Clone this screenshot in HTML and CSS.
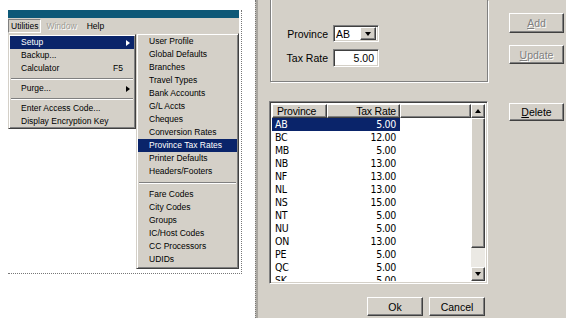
FILE: index.html
```html
<!DOCTYPE html>
<html lang="en">
<head>
    <meta charset="UTF-8">
    <meta name="viewport" content="width=device-width, initial-scale=1.0">
    <title>Province Tax Rates</title>
    <link rel="stylesheet" href="styles.css">
</head>
<body>

    <div class="capture">
        <div class="titlebar"></div>
        <div class="menubar">
            <span class="bar-item pressed">Utilities</span>
            <span class="bar-item disabled">Window</span>
            <span class="bar-item">Help</span>
        </div>
        <div class="menus">
            <ul class="menu main-menu">
                <li class="active has-sub">Setup</li>
                <li>Backup...</li>
                <li>Calculator<span class="shortcut">F5</span></li>
                <li class="sep"></li>
                <li class="has-sub">Purge...</li>
                <li class="sep"></li>
                <li>Enter Access Code...</li>
                <li>Display Encryption Key</li>
            </ul>
            <ul class="menu sub-menu">
                <li>User Profile</li>
                <li>Global Defaults</li>
                <li>Branches</li>
                <li>Travel Types</li>
                <li>Bank Accounts</li>
                <li>G/L Accts</li>
                <li>Cheques</li>
                <li>Conversion Rates</li>
                <li class="active">Province Tax Rates</li>
                <li>Printer Defaults</li>
                <li>Headers/Footers</li>
                <li class="sep"></li>
                <li>Fare Codes</li>
                <li>City Codes</li>
                <li>Groups</li>
                <li>IC/Host Codes</li>
                <li>CC Processors</li>
                <li>UDIDs</li>
            </ul>
        </div>
    </div>

    <div class="dialog">
        <div class="main">
            <div class="group">
                <div class="fields">
                    <label>Province</label>
                    <div class="combo sunken">
                        <span>AB</span>
                        <span class="drop raised"><i class="tri-down"></i></span>
                    </div>
                    <label>Tax Rate</label>
                    <div class="textbox sunken">5.00</div>
                </div>
            </div>

            <div class="list sunken">
                <div class="grid">
                    <div class="head">
                        <span class="col-code raised">Province</span>
                        <span class="col-rate raised">Tax Rate</span>
                        <span class="col-fill raised"></span>
                    </div>
                    <div class="row selected"><span class="col-code">AB</span><span class="col-rate">5.00</span></div>
                    <div class="row"><span class="col-code">BC</span><span class="col-rate">12.00</span></div>
                    <div class="row"><span class="col-code">MB</span><span class="col-rate">5.00</span></div>
                    <div class="row"><span class="col-code">NB</span><span class="col-rate">13.00</span></div>
                    <div class="row"><span class="col-code">NF</span><span class="col-rate">13.00</span></div>
                    <div class="row"><span class="col-code">NL</span><span class="col-rate">13.00</span></div>
                    <div class="row"><span class="col-code">NS</span><span class="col-rate">15.00</span></div>
                    <div class="row"><span class="col-code">NT</span><span class="col-rate">5.00</span></div>
                    <div class="row"><span class="col-code">NU</span><span class="col-rate">5.00</span></div>
                    <div class="row"><span class="col-code">ON</span><span class="col-rate">13.00</span></div>
                    <div class="row"><span class="col-code">PE</span><span class="col-rate">5.00</span></div>
                    <div class="row"><span class="col-code">QC</span><span class="col-rate">5.00</span></div>
                    <div class="row"><span class="col-code">SK</span><span class="col-rate">5.00</span></div>
                </div>
                <div class="scrollbar">
                    <span class="sb-btn raised"><i class="tri-up"></i></span>
                    <span class="sb-thumb raised"></span>
                    <span class="sb-track"></span>
                    <span class="sb-btn raised"><i class="tri-down"></i></span>
                </div>
            </div>

            <div class="footer">
                <button class="btn raised">Ok</button>
                <button class="btn raised">Cancel</button>
            </div>
        </div>

        <div class="side">
            <button class="btn raised disabled btn-add"><u>A</u>dd</button>
            <button class="btn raised disabled btn-update"><u>U</u>pdate</button>
            <button class="btn raised btn-delete"><u>D</u>elete</button>
        </div>
    </div>

</body>
</html>
```

FILE: styles.css
```css
* {
    box-sizing: border-box;
}

body {
    margin: 0;
    background: #fff;
    display: flex;
    align-items: flex-start;
    font-family: 'Liberation Sans', Arial, sans-serif;
    color: #000;
}

/* shared win classic bevels */
.raised {
    background: #d4d0c8;
    border: 1px solid;
    border-color: #fff #404040 #404040 #fff;
    box-shadow: inset -1px -1px #808080;
}

.sunken {
    background: #fff;
    border: 1px solid;
    border-color: #808080 #fff #fff #808080;
    box-shadow: inset 1px 1px #404040, inset -1px -1px #d4d0c8;
}

.tri-down,
.tri-up {
    display: block;
    width: 0;
    height: 0;
    border-left: 3.5px solid transparent;
    border-right: 3.5px solid transparent;
}

.tri-down {
    border-top: 4px solid #000;
}

.tri-up {
    border-bottom: 4px solid #000;
}

/* left: menu capture */
.capture {
    margin: 10px 0 0 8px;
    width: 234px;
    height: 264px;
    padding-right: 2px;
    border-right: 1px dotted #777;
    border-bottom: 1px dotted #777;
    font-size: 8.5px;
}

.titlebar {
    height: 8px;
    background: #0d5877;
}

.menubar {
    height: 16px;
    background: #d4d0c8;
    display: flex;
    align-items: center;
}

.bar-item {
    padding: 0 5px;
    line-height: 12px;
}

.bar-item.pressed {
    padding: 0 2px;
    border: 1px solid;
    border-color: #808080 #fff #fff #808080;
}

.bar-item.disabled {
    color: #a09d96;
    text-shadow: 1px 1px #fff;
}

.menus {
    display: flex;
    align-items: flex-start;
}

.menu {
    list-style: none;
    margin: 0;
    padding: 1px;
    background: #d4d0c8;
    border: 1px solid;
    border-color: #d4d0c8 #404040 #404040 #d4d0c8;
    box-shadow: inset 1px 1px #fff, inset -1px -1px #808080;
}

.main-menu {
    width: 128px;
    padding-bottom: 0;
}

.sub-menu {
    width: 103px;
    margin-top: -1px;
    padding-bottom: 2px;
}

.menu li {
    height: 13px;
    line-height: 13px;
    padding: 0 4px 0 11px;
    display: flex;
    align-items: center;
    white-space: nowrap;
}

.menu li.active {
    background: #0a246a;
    color: #fff;
}

.menu li.has-sub::after {
    content: '';
    margin-left: auto;
    border-top: 3.5px solid transparent;
    border-bottom: 3.5px solid transparent;
    border-left: 4px solid currentColor;
}

.menu li.sep {
    height: 7px;
    padding: 0;
    margin: 0 1px;
    background: linear-gradient(#d4d0c8 3px, #808080 3px, #808080 4px, #fff 4px, #fff 5px, #d4d0c8 5px);
}

.sub-menu li.sep {
    height: 10px;
    background: linear-gradient(#d4d0c8 4px, #808080 4px, #808080 5px, #fff 5px, #fff 6px, #d4d0c8 6px);
}

.shortcut {
    margin-left: auto;
    margin-right: 7px;
}

/* right: tax rate dialog */
.dialog {
    margin-left: 13px;
    width: 311px;
    height: 318px;
    padding-left: 13px;
    border-left: 1px dotted #777;
    background: #d4d0c8;
    box-shadow: inset 2px 0 #a9a6a0;
    display: flex;
    gap: 21px;
    font-size: 10.5px;
}

.main {
    width: 219px;
}

.group {
    height: 82px;
    margin-left: 1px;
    border: 1px solid #808080;
    border-top: none;
    box-shadow: inset 1px 0 #fff, 1px 1px #fff;
    padding-top: 25px;
}

.fields {
    display: grid;
    grid-template-columns: 57px 46px;
    column-gap: 5px;
    row-gap: 7px;
    align-items: center;
}

.fields label {
    text-align: right;
}

.combo {
    height: 17px;
    display: flex;
    justify-content: space-between;
    align-items: center;
    padding: 2px;
}

.drop {
    width: 16px;
    height: 13px;
    display: flex;
    justify-content: center;
    align-items: center;
}

.textbox {
    height: 18px;
    line-height: 16px;
    text-align: right;
    padding-right: 4px;
}

.list {
    height: 183px;
    margin-top: 19px;
    display: flex;
    padding: 2px;
    overflow: hidden;
}

.grid {
    flex: 1;
    overflow: hidden;
}

.head {
    display: flex;
    height: 14px;
}

.head span {
    line-height: 12px;
    padding: 0 4px;
    letter-spacing: -0.2px;
}

.col-code {
    width: 55px;
}

.col-rate {
    width: 73px;
    text-align: right;
}

.head .col-rate {
    padding-right: 3px;
}

.col-fill {
    flex: 1;
}

.row {
    display: flex;
    width: 128px;
    height: 13px;
    line-height: 13px;
    font-family: 'DejaVu Sans Condensed', 'Liberation Sans', sans-serif;
    font-size: 10.5px;
    letter-spacing: -0.3px;
}

.row .col-code {
    padding-left: 3px;
}

.row .col-rate {
    padding-right: 4px;
}

.row.selected {
    background: #0a246a;
    color: #fff;
}

.scrollbar {
    width: 14px;
    display: flex;
    flex-direction: column;
    background: #ebe9e4;
}

.sb-btn {
    height: 14px;
    display: flex;
    justify-content: center;
    align-items: center;
}

.sb-thumb {
    height: 130px;
}

.sb-track {
    flex: 1;
}

.footer {
    display: flex;
    justify-content: flex-end;
    gap: 6px;
    margin-top: 13px;
    padding-right: 3px;
}

.btn {
    width: 56px;
    height: 19px;
    padding: 0;
    font-family: inherit;
    font-size: 10.5px;
    color: #000;
}

.side {
    width: 55px;
    padding-top: 13px;
    display: flex;
    flex-direction: column;
}

.side .btn {
    width: 55px;
}

.btn.disabled {
    color: #808080;
    text-shadow: 1px 1px #fff;
}

.btn-add {
    height: 20px;
}

.btn-update {
    margin-top: 12px;
}

.btn-delete {
    margin-top: 39px;
    height: 18px;
}
```
